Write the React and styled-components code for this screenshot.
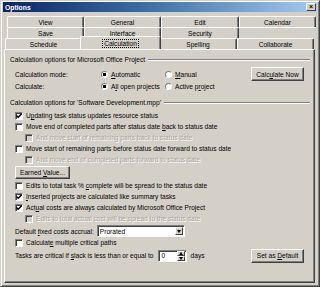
import React from "react";
import styled, { createGlobalStyle, css } from "styled-components";

const GlobalStyle = createGlobalStyle`
  html, body {
    margin: 0;
    padding: 0;
    background: #d4d0c8;
  }
  body {
    font-family: "Liberation Sans", Arial, sans-serif;
  }
`;

const Window = styled.div`
  width: 320px;
  height: 287px;
  box-sizing: border-box;
  background: #d4d0c8;
  border: 1px solid #404040;
  border-top-color: #d4d0c8;
  border-left-color: #d4d0c8;
  box-shadow: inset 1px 1px 0 #fff, inset -1px -1px 0 #808080;
  padding: 1px 2px 2px 2px;
  display: flex;
  flex-direction: column;
  font-size: 6.6px;
  color: #000;
`;

const TitleBar = styled.div`
  height: 10px;
  display: flex;
  align-items: center;
  justify-content: space-between;
  padding: 0 1px 0 2px;
  background: linear-gradient(to right, #0a246a 0%, #3a6ea5 45%, #a6caf0 100%);
  color: #fff;
  font-weight: bold;
  font-size: 6.8px;
`;

const CloseBtn = styled.div`
  width: 10px;
  height: 8px;
  box-sizing: border-box;
  background: #d4d0c8;
  border: 1px solid;
  border-color: #fff #404040 #404040 #fff;
  color: #000;
  font-size: 7px;
  line-height: 5px;
  text-align: center;
  font-weight: bold;
`;

const Body = styled.div`
  flex: 1;
  display: flex;
  flex-direction: column;
  padding: 4px 1px 0 1px;
`;

const TabRow = styled.div`
  display: grid;
  grid-template-columns: 77px 77px 78px 77px;
  height: 11px;
  padding-left: ${(p) => p.$indent}px;
  position: relative;
  z-index: ${(p) => (p.$front ? 2 : 1)};
`;

const Tab = styled.div`
  box-sizing: border-box;
  height: 11px;
  display: flex;
  align-items: center;
  justify-content: center;
  background: #d4d0c8;
  ${(p) =>
    p.$empty
      ? css`
          border-top: 1px solid #fff;
        `
      : css`
          border-top: 1px solid #fff;
          border-left: 1px solid #fff;
          border-right: 1px solid #404040;
          box-shadow: inset -1px 0 0 #808080;
          border-radius: 2px 2px 0 0;
        `}
  ${(p) =>
    p.$active &&
    css`
      height: 13px;
      margin-top: -2px;
      margin-left: -2px;
      margin-right: -2px;
      position: relative;
      z-index: 3;
    `}
`;

const FocusLabel = styled.span`
  outline: 1px dotted #000;
  outline-offset: 0;
  padding: 0 1px;
`;

const Panel = styled.div`
  flex: 1;
  box-sizing: border-box;
  border: 1px solid;
  border-color: #fff #404040 #404040 #fff;
  box-shadow: inset -1px -1px 0 #808080;
  padding: 5px 4px 0 5px;
  margin-right: 1px;
  margin-bottom: 1px;
  display: flex;
  flex-direction: column;
`;

const GroupHead = styled.div`
  height: 9px;
  display: flex;
  align-items: center;
  gap: 3px;
  margin-top: ${(p) => p.$top || 0}px;
  &::after {
    content: "";
    flex: 1;
    height: 0;
    border-top: 1px solid #808080;
    border-bottom: 1px solid #fff;
  }
`;

const Indent = styled.div`
  padding-left: ${(p) => p.$by}px;
  display: flex;
  flex-direction: column;
`;

const ModeGrid = styled.div`
  display: grid;
  grid-template-columns: 86px 64px 1fr auto;
  grid-auto-rows: 12px;
  align-items: center;
  margin-top: 4px;
  padding-right: 6px;
`;

const Radio = styled.label`
  display: flex;
  align-items: center;
  gap: 3px;
  &::before {
    content: "";
    width: 7px;
    height: 7px;
    box-sizing: border-box;
    border-radius: 50%;
    border: 1px solid;
    border-color: #808080 #fff #fff #808080;
    background: ${(p) =>
      p.$on
        ? "radial-gradient(circle, #000 0 1.4px, #fff 1.7px)"
        : "#fff"};
    box-shadow: 0 0 0 0.5px #d4d0c8;
  }
`;

const Button = styled.div`
  box-sizing: border-box;
  height: ${(p) => p.$h || 13}px;
  width: ${(p) => p.$w}px;
  margin-right: ${(p) => p.$mr || 0}px;
  display: flex;
  align-items: center;
  justify-content: center;
  background: #d4d0c8;
  border: 1px solid;
  border-color: #fff #404040 #404040 #fff;
  box-shadow: inset -1px -1px 0 #808080;
`;

const U = styled.span`
  text-decoration: underline;
  text-underline-offset: 1px;
`;

const CheckRow = styled.label`
  height: 11px;
  display: flex;
  align-items: center;
  gap: 3px;
  color: ${(p) => (p.$disabled ? "#aaa69e" : "#000")};
  text-shadow: ${(p) => (p.$disabled ? "1px 1px 0 #fff" : "none")};
`;

const Box = styled.span`
  width: 8px;
  height: 8px;
  box-sizing: border-box;
  border: 1px solid;
  border-color: #808080 #fff #fff #808080;
  box-shadow: inset 1px 1px 0 #404040;
  background: ${(p) => (p.$disabled ? "#d4d0c8" : "#fff")};
  display: flex;
  align-items: center;
  justify-content: center;
  flex: none;
`;

const Gap = styled.div`
  height: ${(p) => p.$h}px;
`;

const FieldRow = styled.div`
  height: ${(p) => p.$h || 12}px;
  display: flex;
  align-items: center;
  gap: ${(p) => p.$gap || 4}px;
`;

const Select = styled.div`
  box-sizing: border-box;
  width: 88px;
  height: 12px;
  background: #fff;
  border: 1px solid;
  border-color: #808080 #fff #fff #808080;
  box-shadow: inset 1px 1px 0 #404040;
  display: flex;
  align-items: center;
  justify-content: space-between;
  padding: 0 1px 0 2px;
`;

const Arrow = styled.span`
  width: 8px;
  height: 8px;
  box-sizing: border-box;
  background: #d4d0c8;
  border: 1px solid;
  border-color: #fff #404040 #404040 #fff;
  display: flex;
  align-items: center;
  justify-content: center;
`;

const Spin = styled.div`
  box-sizing: border-box;
  width: 29px;
  height: 12px;
  background: #fff;
  border: 1px solid;
  border-color: #808080 #fff #fff #808080;
  box-shadow: inset 1px 1px 0 #404040;
  display: flex;
  align-items: center;
  justify-content: space-between;
  padding: 0 1px 0 3px;
`;

const SpinButtons = styled.span`
  display: flex;
  flex-direction: column;
  width: 8px;
  height: 9px;
`;

const SpinBtn = styled.span`
  flex: 1;
  box-sizing: border-box;
  background: #d4d0c8;
  border: 1px solid;
  border-color: #fff #404040 #404040 #fff;
  display: flex;
  align-items: center;
  justify-content: center;
`;

const Spacer = styled.div`
  flex: 1;
`;

const Tick = () => (
  <svg width="6" height="6" viewBox="0 0 7 7">
    <path d="M0.5 3 L2.5 5 L6.5 1" fill="none" stroke="#000" strokeWidth="1.6" />
  </svg>
);

const Tri = ({ up }) => (
  <svg width="4" height="3" viewBox="0 0 4 3">
    <path d={up ? "M0 3 L2 0 L4 3 Z" : "M0 0 L4 0 L2 3 Z"} fill="#000" />
  </svg>
);

const Check = ({ on, disabled, children }) => (
  <CheckRow $disabled={disabled}>
    <Box $disabled={disabled}>{on && <Tick />}</Box>
    <span>{children}</span>
  </CheckRow>
);

const Option = ({ on, children }) => (
  <Radio $on={on}>
    <span>{children}</span>
  </Radio>
);

const tabRows = [
  { indent: 3, tabs: ["View", "General", "Edit", "Calendar"] },
  { indent: 3, tabs: ["Save", "Interface", "Security", ""] },
  { indent: 1, tabs: ["Schedule", "Calculation", "Spelling", "Collaborate"], front: true },
];

export default function App() {
  return (
    <>
      <GlobalStyle />
      <Window>
        <TitleBar>
          <span>Options</span>
          <CloseBtn>×</CloseBtn>
        </TitleBar>
        <Body>
          {tabRows.map((row, i) => (
            <TabRow key={i} $indent={row.indent} $front={row.front}>
              {row.tabs.map((t, j) =>
                t === "Calculation" ? (
                  <Tab key={j} $active>
                    <FocusLabel>Calculation</FocusLabel>
                  </Tab>
                ) : (
                  <Tab key={j} $empty={!t}>
                    {t}
                  </Tab>
                )
              )}
            </TabRow>
          ))}
          <Panel>
            <GroupHead>Calculation options for Microsoft Office Project</GroupHead>
            <Indent $by={5}>
              <ModeGrid>
                <span>Calculation mode:</span>
                <Option on>
                  <U>A</U>utomatic
                </Option>
                <Option>
                  <U>M</U>anual
                </Option>
                <Button $w={53} $h={14}>
                  <span>
                    Calc<U>u</U>late Now
                  </span>
                </Button>
                <span>Calculate:</span>
                <Option on>
                  A<U>l</U>l open projects
                </Option>
                <Option>
                  Active p<U>r</U>oject
                </Option>
                <span />
              </ModeGrid>
            </Indent>
            <GroupHead $top={6}>
              Calculation options for 'Software Development.mpp'
            </GroupHead>
            <Indent $by={5}>
              <Gap $h={3} />
              <Check on>
                U<U>p</U>dating task status updates resource status
              </Check>
              <Check>
                Move end of completed parts after status date <U>b</U>ack to status date
              </Check>
              <Indent $by={10}>
                <Check disabled>And move start of remaining parts back to status date</Check>
              </Indent>
              <Check>
                Move start of remaining parts before status date forward to status date
              </Check>
              <Indent $by={10}>
                <Check disabled>And move end of completed parts forward to status date</Check>
              </Indent>
              <Gap $h={1} />
              <Button $w={55} $h={13}>
                <span>
                  Earned <U>V</U>alue...
                </span>
              </Button>
              <Gap $h={1} />
              <Check>
                Edits to total task % <U>c</U>omplete will be spread to the status date
              </Check>
              <Check on>
                <U>I</U>nserted projects are calculated like summary tasks
              </Check>
              <Check on>
                Act<U>u</U>al costs are always calculated by Microsoft Office Project
              </Check>
              <Indent $by={10}>
                <Check disabled>Edits to total actual cost will be spread to the status date</Check>
              </Indent>
              <Gap $h={1} />
              <FieldRow $h={12} $gap={3}>
                <span>
                  Default <U>f</U>ixed costs accrual:
                </span>
                <Select>
                  <span>Prorated</span>
                  <Arrow>
                    <Tri />
                  </Arrow>
                </Select>
              </FieldRow>
              <Check>
                Calculat<U>e</U> multiple critical paths
              </Check>
              <FieldRow $h={15} $gap={4}>
                <span>
                  Tasks are critical if <U>s</U>lack is less than or equal to
                </span>
                <Spin>
                  <span>0</span>
                  <SpinButtons>
                    <SpinBtn>
                      <Tri up />
                    </SpinBtn>
                    <SpinBtn>
                      <Tri />
                    </SpinBtn>
                  </SpinButtons>
                </Spin>
                <span>days</span>
                <Spacer />
                <Button $w={53} $h={14} $mr={6}>
                  <span>
                    Set as <U>D</U>efault
                  </span>
                </Button>
              </FieldRow>
            </Indent>
          </Panel>
        </Body>
      </Window>
    </>
  );
}
